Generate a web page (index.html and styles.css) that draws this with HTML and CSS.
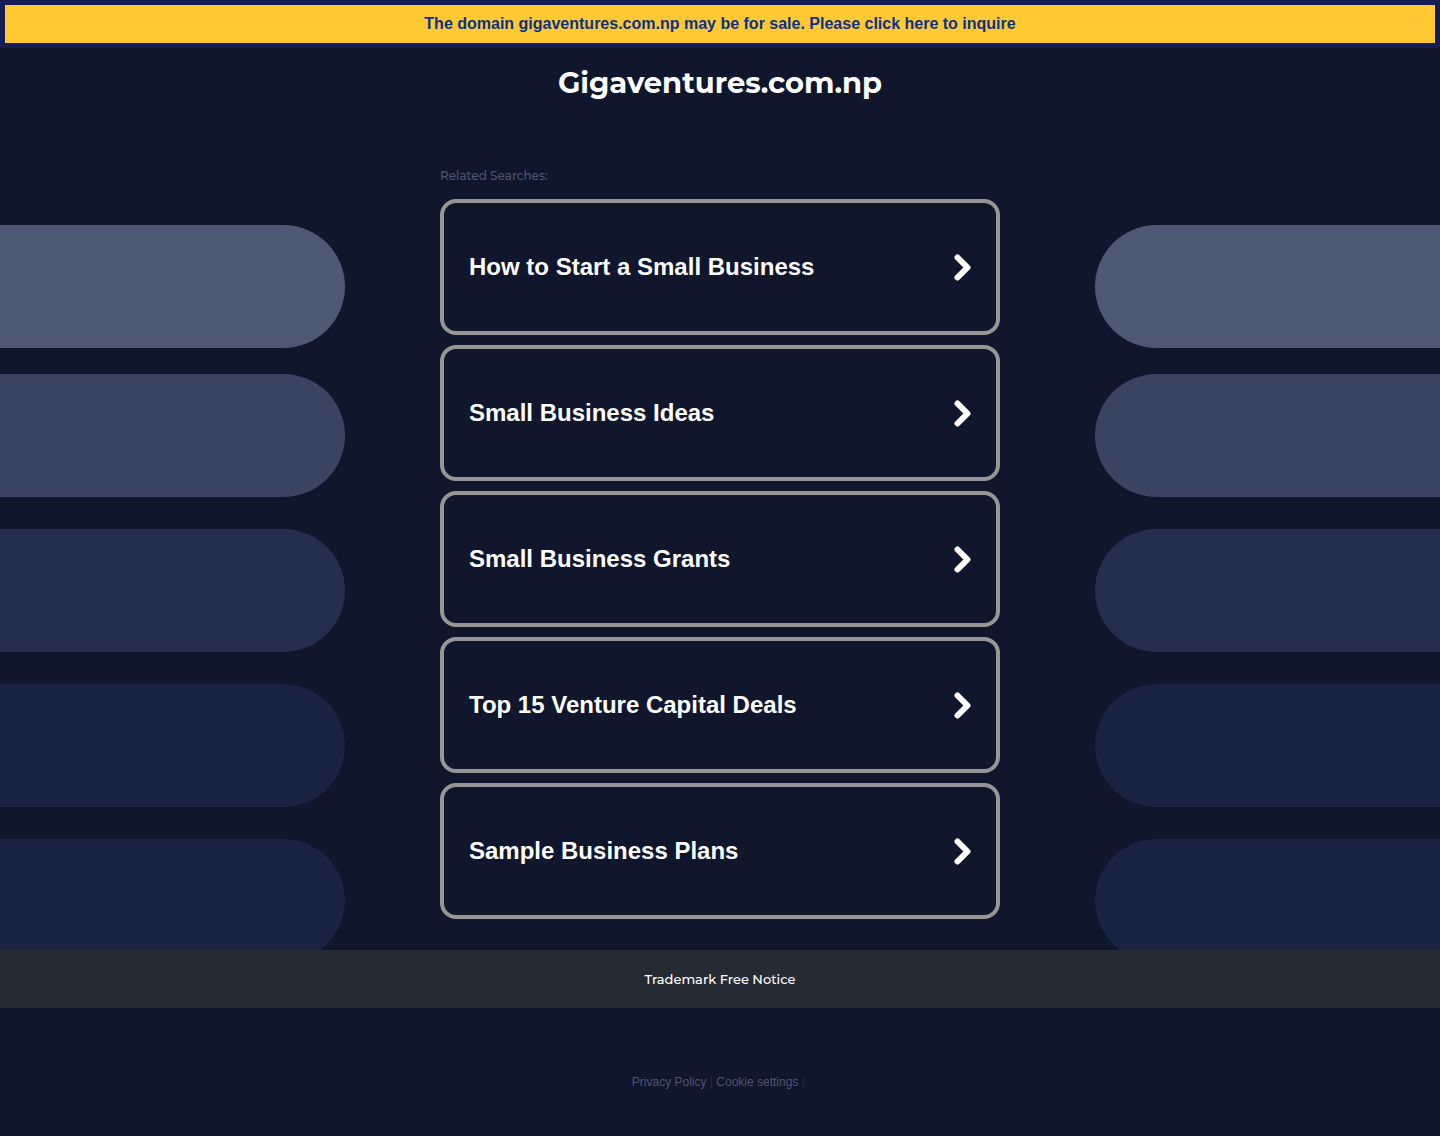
FILE: index.html
```html
<!DOCTYPE html>
<html lang="en">
<head>
<meta charset="utf-8">
<meta name="viewport" content="width=device-width, initial-scale=1">
<title>Gigaventures.com.np</title>
<link rel="stylesheet" href="styles.css">
</head>
<body>
<a class="sale-banner" href="#inquire">The domain gigaventures.com.np may be for sale. Please click here to inquire</a>
<div class="stage">
  <div class="pills pills-left" aria-hidden="true">
    <span class="pill tone-1"></span><span class="pill tone-2"></span><span class="pill tone-3"></span><span class="pill tone-4"></span><span class="pill tone-4"></span>
  </div>
  <main class="content">
    <h1 class="domain">Gigaventures.com.np</h1>
    <h2 class="label">Related Searches:</h2>
    <nav class="searches">
      <a class="card" href="#start"><span>How to Start a Small Business</span><svg class="chevron" viewBox="0 0 18 28" aria-hidden="true"><path d="M3.5 4.5 13.5 14.5 3.5 24.5"/></svg></a>
      <a class="card" href="#ideas"><span>Small Business Ideas</span><svg class="chevron" viewBox="0 0 18 28" aria-hidden="true"><path d="M3.5 4.5 13.5 14.5 3.5 24.5"/></svg></a>
      <a class="card" href="#grants"><span>Small Business Grants</span><svg class="chevron" viewBox="0 0 18 28" aria-hidden="true"><path d="M3.5 4.5 13.5 14.5 3.5 24.5"/></svg></a>
      <a class="card" href="#deals"><span>Top 15 Venture Capital Deals</span><svg class="chevron" viewBox="0 0 18 28" aria-hidden="true"><path d="M3.5 4.5 13.5 14.5 3.5 24.5"/></svg></a>
      <a class="card" href="#plans"><span>Sample Business Plans</span><svg class="chevron" viewBox="0 0 18 28" aria-hidden="true"><path d="M3.5 4.5 13.5 14.5 3.5 24.5"/></svg></a>
    </nav>
  </main>
  <div class="pills pills-right" aria-hidden="true">
    <span class="pill tone-1"></span><span class="pill tone-2"></span><span class="pill tone-3"></span><span class="pill tone-4"></span><span class="pill tone-4"></span>
  </div>
</div>
<div class="notice"><a href="#trademark">Trademark Free Notice</a></div>
<footer class="footer"><a href="#privacy">Privacy Policy</a> | <a href="#cookies">Cookie settings</a> |&nbsp;</footer>
</body>
</html>
```
FILE: styles.css
```css
* { box-sizing: border-box; }

body {
  margin: 0;
  background: #10162b;
  color: #fff;
  font-family: "Liberation Sans", Arial, sans-serif;
}

a { color: inherit; text-decoration: none; }

.sale-banner {
  display: block;
  padding: 9px;
  border: 5px solid #171c55;
  background: #ffc933;
  color: #0a328c;
  font-size: 16px;
  font-weight: 700;
  line-height: 20px;
  text-align: center;
}

.stage {
  display: grid;
  grid-template-columns: 1fr minmax(0, 560px) 1fr;
}

.content { padding-bottom: 31px; }

.domain {
  margin: 0;
  padding: 15px 0 14px;
  font: 700 29px/40px Montserrat, Inter, sans-serif;
  text-align: center;
}

.label {
  margin: 0;
  padding: 49px 0 13px;
  color: #4c5573;
  font: 500 12px/20px Montserrat, Inter, sans-serif;
}

.searches { display: grid; gap: 10px; }

.card {
  display: flex;
  align-items: center;
  justify-content: space-between;
  min-height: 136px;
  padding: 0 24px 0 25px;
  border: 4px solid #969696;
  border-radius: 16px;
  font-size: 24px;
  font-weight: 700;
  line-height: 28px;
}

.chevron {
  flex: none;
  width: 18px;
  height: 28px;
  fill: none;
  stroke: #fff;
  stroke-width: 6;
  stroke-linecap: round;
  stroke-linejoin: round;
}

/* Decorative bars run off both edges and never add height to the stage. */
.pills {
  contain: size;
  overflow: hidden;
  display: flex;
  flex-direction: column;
  gap: 32px;
  padding-top: 177px;
}

.pills-left { padding-right: 95px; }
.pills-right { padding-left: 95px; }

.pill { flex: none; height: 123px; }
.pills-left .pill { border-radius: 0 62px 62px 0; }
.pills-right .pill { border-radius: 62px 0 0 62px; }

.tone-1 { margin-bottom: -6px; background: #4e5773; }
.tone-2 { background: #3a4362; }
.tone-3 { background: #252e4e; }
.tone-4 { background: #1a2344; }

.notice {
  padding: 19px;
  background: #242b33;
  font: 500 13px/20px Montserrat, Inter, sans-serif;
  text-align: center;
}

.footer {
  padding: 64px 16px 44px;
  color: #2b2b2b;
  font-size: 12px;
  line-height: 20px;
  text-align: center;
}

.footer a { color: #4c5573; }
```
